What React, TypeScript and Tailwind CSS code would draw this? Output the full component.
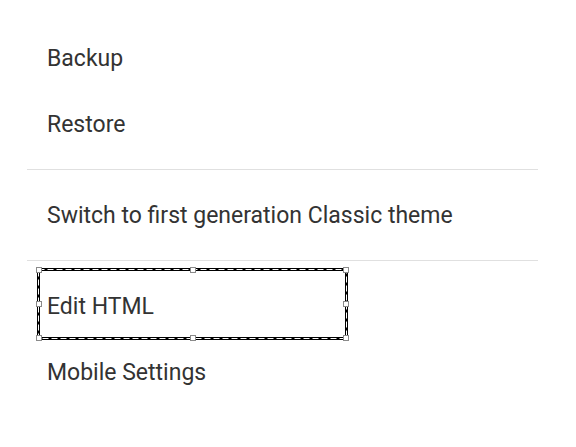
import React from "react"

function Item({ label }: { label: string }) {
  return (
    <div className="flex h-[66px] items-center pl-5 text-[23px] text-[#333333]">
      {label}
    </div>
  )
}

function Divider() {
  return <div className="mt-[11px] mb-[13px] h-px bg-[#e0e0e0]" />
}

function Handle({ className }: { className: string }) {
  return <div className={`absolute h-[6px] w-[6px] border border-[#8a8a8a] bg-white ${className}`} />
}

export default function App() {
  return (
    <div className="min-h-screen bg-white pt-[26px]" style={{ fontFamily: "Roboto, sans-serif" }}>
      <div className="ml-[27px] w-[511px]">
        <Item label="Backup" />
        <Item label="Restore" />
        <Divider />
        <Item label="Switch to first generation Classic theme" />
        <Divider />
        <div className="relative">
          <Item label="Edit HTML" />
          {/* editor selection overlay */}
          <div className="pointer-events-none absolute left-[10px] top-[-6px] h-[72px] w-[311px] border-[3px] border-black">
            <svg className="absolute -left-[3px] -top-[3px] h-[72px] w-[311px]" viewBox="0 0 311 72">
              <rect x="1.5" y="1.5" width="308" height="69" fill="none" stroke="#fff" strokeWidth="1" strokeDasharray="6 3" />
            </svg>
            <Handle className="-left-[4px] -top-[4px]" />
            <Handle className="left-[150px] -top-[4px]" />
            <Handle className="-right-[4px] -top-[4px]" />
            <Handle className="-left-[4px] top-[30px]" />
            <Handle className="-right-[4px] top-[30px]" />
            <Handle className="-left-[4px] -bottom-[4px]" />
            <Handle className="left-[150px] -bottom-[4px]" />
            <Handle className="-right-[4px] -bottom-[4px]" />
          </div>
        </div>
        <Item label="Mobile Settings" />
      </div>
    </div>
  )
}
